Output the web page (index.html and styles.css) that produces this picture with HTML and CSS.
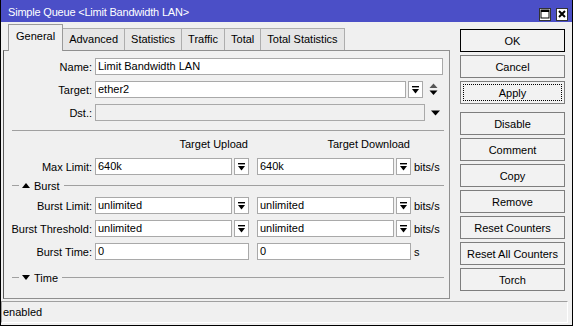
FILE: index.html
```html
<!DOCTYPE html>
<html>
<head>
<meta charset="utf-8">
<link rel="stylesheet" href="styles.css">
</head>
<body>
<div class="window">
  <div class="titlebar">
    <span class="title">Simple Queue &lt;Limit Bandwidth LAN&gt;</span>
    <div class="tb-buttons">
      <span class="tb-btn"><svg width="10" height="10" viewBox="0 0 10 10"><rect x="1" y="1" width="8" height="8" fill="none" stroke="#000" stroke-width="1"/><rect x="1" y="1" width="8" height="2" fill="#000"/></svg></span>
      <span class="tb-btn"><svg width="10" height="10" viewBox="0 0 10 10"><path d="M2 2 L8 8 M8 2 L2 8" stroke="#000" stroke-width="2"/></svg></span>
    </div>
  </div>
  <div class="main">
    <div class="left">
      <div class="tabs">
        <div class="tab active">General</div>
        <div class="tab">Advanced</div>
        <div class="tab">Statistics</div>
        <div class="tab">Traffic</div>
        <div class="tab">Total</div>
        <div class="tab">Total Statistics</div>
      </div>
      <div class="panel">
        <div class="row">
          <span class="lbl">Name:</span>
          <div class="input w-name">Limit Bandwidth LAN</div>
        </div>
        <div class="row">
          <span class="lbl">Target:</span>
          <div class="input w-target">ether2</div>
          <span class="dd"><svg width="7" height="8" viewBox="0 0 7 8"><rect x="0" y="0" width="7" height="1.4" fill="#000"/><polygon points="0,3 7,3 3.5,7.5" fill="#000"/></svg></span>
          <span class="updown"><svg width="9" height="13" viewBox="0 0 9 13"><polygon points="0.5,5 8.5,5 4.5,0.5" fill="#555"/><polygon points="0.5,7.5 8.5,7.5 4.5,12" fill="#000"/></svg></span>
        </div>
        <div class="row">
          <span class="lbl">Dst.:</span>
          <div class="input disabled w-dst"></div>
          <span class="drop"><svg width="9" height="6" viewBox="0 0 9 6"><polygon points="0,0.5 9,0.5 4.5,5.5" fill="#000"/></svg></span>
        </div>
        <div class="sep"></div>
        <div class="hdr">
          <span class="hdr-spacer"></span>
          <span class="col hdr-text">Target Upload</span>
          <span class="col hdr-text">Target Download</span>
        </div>
        <div class="row">
          <span class="lbl">Max Limit:</span>
          <div class="col combo"><div class="input">640k</div><span class="dd"><svg width="7" height="8" viewBox="0 0 7 8"><rect x="0" y="0" width="7" height="1.4" fill="#000"/><polygon points="0,3 7,3 3.5,7.5" fill="#000"/></svg></span></div>
          <div class="col combo"><div class="input">640k</div><span class="dd"><svg width="7" height="8" viewBox="0 0 7 8"><rect x="0" y="0" width="7" height="1.4" fill="#000"/><polygon points="0,3 7,3 3.5,7.5" fill="#000"/></svg></span></div>
          <span class="unit">bits/s</span>
        </div>
        <div class="section burst">
          <span class="sec-dash"></span>
          <svg class="sec-tri" width="8" height="5" viewBox="0 0 8 5"><polygon points="0,5 8,5 4,0" fill="#000"/></svg>
          <span class="sec-label">Burst</span>
          <span class="sec-line"></span>
        </div>
        <div class="row">
          <span class="lbl">Burst Limit:</span>
          <div class="col combo"><div class="input">unlimited</div><span class="dd"><svg width="7" height="8" viewBox="0 0 7 8"><rect x="0" y="0" width="7" height="1.4" fill="#000"/><polygon points="0,3 7,3 3.5,7.5" fill="#000"/></svg></span></div>
          <div class="col combo"><div class="input">unlimited</div><span class="dd"><svg width="7" height="8" viewBox="0 0 7 8"><rect x="0" y="0" width="7" height="1.4" fill="#000"/><polygon points="0,3 7,3 3.5,7.5" fill="#000"/></svg></span></div>
          <span class="unit">bits/s</span>
        </div>
        <div class="row">
          <span class="lbl">Burst Threshold:</span>
          <div class="col combo"><div class="input">unlimited</div><span class="dd"><svg width="7" height="8" viewBox="0 0 7 8"><rect x="0" y="0" width="7" height="1.4" fill="#000"/><polygon points="0,3 7,3 3.5,7.5" fill="#000"/></svg></span></div>
          <div class="col combo"><div class="input">unlimited</div><span class="dd"><svg width="7" height="8" viewBox="0 0 7 8"><rect x="0" y="0" width="7" height="1.4" fill="#000"/><polygon points="0,3 7,3 3.5,7.5" fill="#000"/></svg></span></div>
          <span class="unit">bits/s</span>
        </div>
        <div class="row">
          <span class="lbl">Burst Time:</span>
          <div class="col combo"><div class="input">0</div></div>
          <div class="col combo"><div class="input">0</div></div>
          <span class="unit">s</span>
        </div>
        <div class="section time">
          <span class="sec-dash"></span>
          <svg class="sec-tri" width="8" height="5" viewBox="0 0 8 5"><polygon points="0,0 8,0 4,5" fill="#000"/></svg>
          <span class="sec-label">Time</span>
          <span class="sec-line"></span>
        </div>
      </div>
    </div>
    <div class="buttons">
      <div class="btn default">OK</div>
      <div class="btn">Cancel</div>
      <div class="btn focus apply"><span class="focus-ring">Apply</span></div>
      <div class="btn">Disable</div>
      <div class="btn">Comment</div>
      <div class="btn">Copy</div>
      <div class="btn">Remove</div>
      <div class="btn">Reset Counters</div>
      <div class="btn">Reset All Counters</div>
      <div class="btn">Torch</div>
    </div>
  </div>
  <div class="status"><div class="status-field">enabled</div></div>
</div>
</body>
</html>
```
FILE: styles.css
```css
* { box-sizing: border-box; }
html, body { margin: 0; padding: 0; }
body {
  width: 573px;
  height: 326px;
  overflow: hidden;
  font-family: "Liberation Sans", Arial, sans-serif;
  font-size: 11px;
  color: #000;
  background: #f0f0f0;
}
.window {
  width: 573px;
  height: 326px;
  border: 1px solid #000;
  border-top: none;
  background: #f0f0f0;
  display: flex;
  flex-direction: column;
}
.titlebar {
  height: 22px;
  background: #4b4fc7;
  color: #fff;
  display: flex;
  align-items: center;
  padding: 2px 4px 0 7px;
  font-size: 11px;
}
.title { flex: 1; letter-spacing: -0.2px; }
.tb-buttons { display: flex; gap: 5px; margin-top: 4px; }
.tb-btn {
  width: 12px;
  height: 13px;
  background: #fff;
  border: 1px solid #333;
  display: flex;
  align-items: center;
  justify-content: center;
}
.tb-btn svg { display: block; }
.main {
  height: 275px;
  margin-top: 2px;
  display: flex;
  padding-left: 2px;
}
.left { width: 447px; display: flex; flex-direction: column; }
.tabs {
  height: 26px;
  display: flex;
  align-items: flex-end;
  padding-left: 5px;
}
.tab {
  height: 22px;
  padding: 0 6px;
  display: flex;
  align-items: center;
  background: #e6e6e6;
  border: 1px solid #adadad;
  border-bottom: none;
  margin-left: -1px;
  line-height: 1;
}
.tab.active {
  height: 27px;
  margin-bottom: -1px;
  margin-left: 0;
  background: #f0f0f0;
  position: relative;
  z-index: 1;
  padding: 0 7px;
  padding-bottom: 3px;
  border-color: #9a9a9a;
}
.panel {
  height: 249px;
  border: 1px solid #8f8f8f;
  border-left-color: #5a5a5a;
  background: #f0f0f0;
  padding-top: 7px;
  display: flex;
  flex-direction: column;
}
.row {
  height: 17px;
  display: flex;
  align-items: center;
  margin-bottom: 6px;
}
.lbl {
  width: 88px;
  margin-right: 3px;
  text-align: right;
  white-space: nowrap;
}
.input {
  height: 17px;
  background: #fff;
  border: 1px solid #a9a9a9;
  padding: 0 2px;
  line-height: 15px;
  white-space: nowrap;
  overflow: hidden;
}
.input.disabled { background: #f0f0f0; }
.w-name { width: 348px; }
.w-target { width: 311px; }
.w-dst { width: 330px; }
.dd {
  width: 15px;
  height: 17px;
  margin-left: 2px;
  background: #fff;
  border: 1px solid #a9a9a9;
  display: flex;
  align-items: center;
  justify-content: center;
  flex: none;
}
.dd svg { display: block; }
.updown { margin-left: 6px; display: flex; }
.updown svg, .drop svg { display: block; }
.drop { margin-left: 6px; display: flex; margin-top: 1px; }
.sep {
  height: 1px;
  background: #a0a0a0;
  margin: 3px 5px 0 8px;
}
.hdr {
  height: 14px;
  margin-top: 6px;
  margin-bottom: 7px;
  display: flex;
  align-items: center;
}
.hdr-spacer { width: 91px; }
.col { width: 154px; flex: none; }
.col + .col { margin-left: 8px; }
.hdr-text { text-align: right; padding-right: 1px; }
.combo { display: flex; }
.combo .input { flex: 1; }
.unit { margin-left: 3px; }
.section {
  height: 13px;
  display: flex;
  align-items: center;
  margin-right: 5px;
}
.section.burst { margin-top: -2px; margin-bottom: 5px; }
.section.time { margin-top: 5px; }
.sec-dash { width: 7px; height: 1px; background: #a0a0a0; margin-left: 8px; }
.sec-tri { margin-left: 3px; display: block; }
.sec-label { margin-left: 4px; }
.sec-line { flex: 1; height: 1px; background: #a0a0a0; margin-left: 4px; }
.buttons {
  width: 105px;
  margin-left: 10px;
  padding-top: 5px;
  display: flex;
  flex-direction: column;
}
.btn {
  height: 23px;
  margin-bottom: 3px;
  background: #f2f2f2;
  border: 1px solid #7e7e7e;
  display: flex;
  align-items: center;
  justify-content: center;
  white-space: nowrap;
}
.btn.default { border-color: #000; }
.btn.apply { margin-bottom: 8px; padding: 2px; }
.focus-ring {
  width: 100%;
  height: 100%;
  border: 1px dotted #000;
  display: flex;
  align-items: center;
  justify-content: center;
}
.status {
  margin-top: 2px;
  height: 22px;
  padding-right: 4px;
}
.status-field {
  height: 22px;
  border-top: 1px solid #a0a0a0;
  border-left: 1px solid #a0a0a0;
  border-right: 1px solid #fff;
  border-bottom: 1px solid #fff;
  padding-left: 1px;
  line-height: 20px;
}
```
